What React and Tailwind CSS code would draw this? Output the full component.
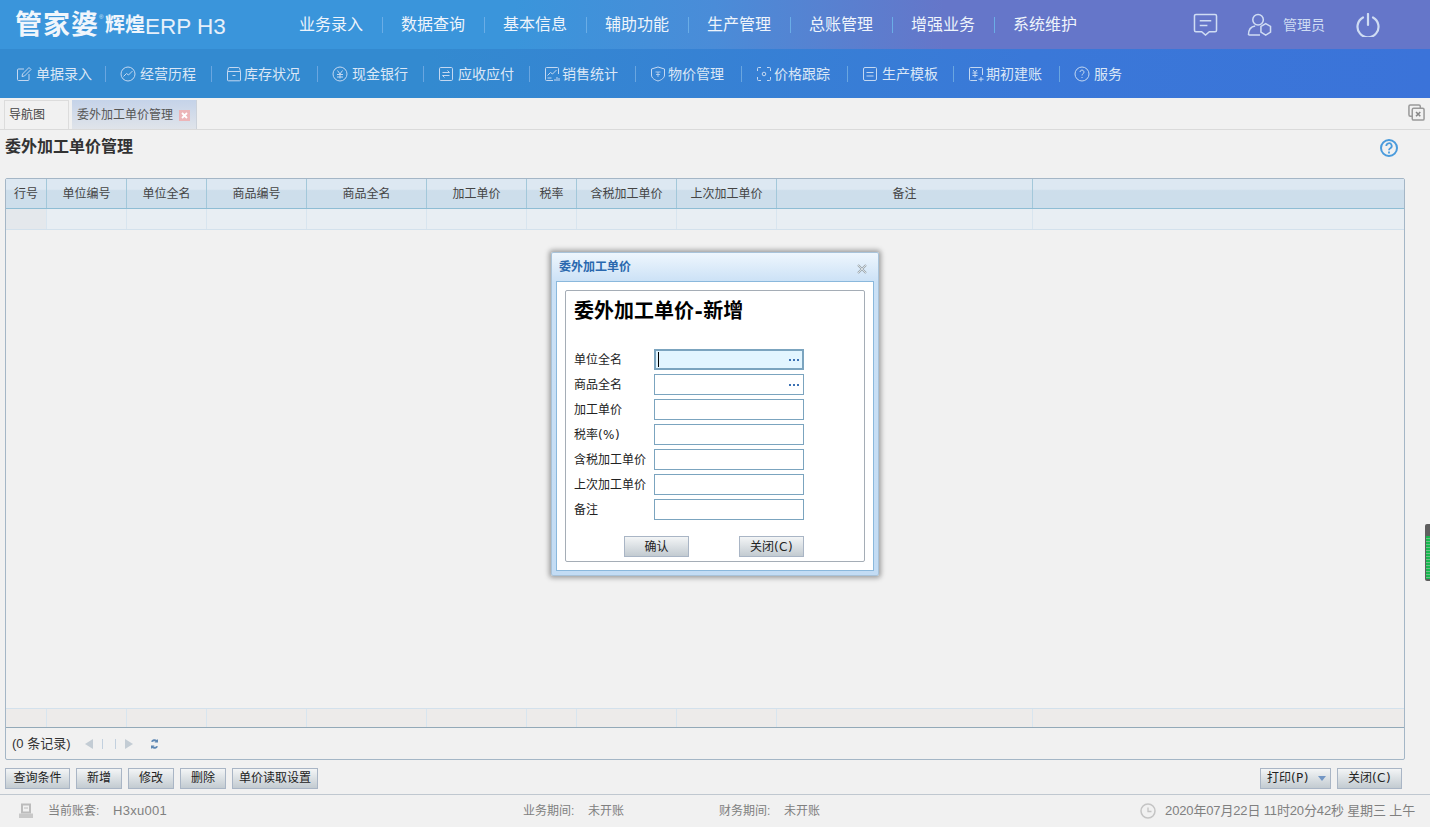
import React from 'react';

const cjk = "font-['Liberation_Sans','Noto_Sans_CJK_SC',sans-serif]";
const wide = "font-['DejaVu_Sans',sans-serif] tracking-[0.400px]";

const topMenus = ['业务录入', '数据查询', '基本信息', '辅助功能', '生产管理', '总账管理', '增强业务', '系统维护'];

const Stroke = ({ children, className = 'w-4 h-4' }) => (
  <svg viewBox="0 0 16 16" fill="none" stroke="currentColor" strokeWidth="1" className={className}>
    {children}
  </svg>
);

const subMenus = [
  {
    label: '单据录入',
    lead: 'w-[36px] pl-[16px]',
    icon: <><path d="M13 8v5.500a1 1 0 0 1-1 1H2.500a1 1 0 0 1-1-1V4a1 1 0 0 1 1-1H8" /><path d="M6 10.500l.5-2.500L13 1.500l2 2L8.500 10z" /></>,
  },
  {
    label: '经营历程',
    lead: 'w-[34px] pl-[14px]',
    icon: <><circle cx="8" cy="8" r="7" /><path d="M3.500 10.500l3-3 2 1.500 4-4" /></>,
  },
  {
    label: '库存状况',
    lead: 'w-[32px] pl-[14px]',
    icon: <><path d="M1.500 5.500V14a.8.8 0 0 0 .8.8h11.400a.8.8 0 0 0 .8-.8V5.500" /><path d="M1.500 5.500l1-3.500a.8.8 0 0 1 .8-.5h9.400a.8.8 0 0 1 .8.5l1 3.500z" /><path d="M6.500 9.500h3" /></>,
  },
  {
    label: '现金银行',
    lead: 'w-[34px] pl-[14px]',
    icon: <><circle cx="8" cy="8" r="7" /><path d="M5.500 4.500L8 8l2.500-3.500M5 8.500h6M5 11h6M8 8v4.500" /></>,
  },
  {
    label: '应收应付',
    lead: 'w-[34px] pl-[14px]',
    icon: <><rect x="1.500" y="1.500" width="13" height="13" rx="1.200" /><path d="M4.500 6.500h7l-2-2M11.500 9.500h-7l2 2" /></>,
  },
  {
    label: '销售统计',
    lead: 'w-[32px] pl-[14px]',
    icon: <><path d="M9 14.500H2.500a1 1 0 0 1-1-1v-11a1 1 0 0 1 1-1h11a1 1 0 0 1 1 1V8" /><path d="M3.500 9.500l3-3 2 1.500 4-4M3.500 12h4M11 15v-2M13 15v-4M15 15v-3" /></>,
  },
  {
    label: '物价管理',
    lead: 'w-[32px] pl-[14px]',
    icon: <><path d="M8 1l6.500 2v6c0 3-3 5-6.500 6C4.500 14 1.500 12 1.500 9V3z" /><path d="M5.500 6h5M6 8.500h4M8 6v5" strokeWidth="0.8" /></>,
  },
  {
    label: '价格跟踪',
    lead: 'w-[32px] pl-[14px]',
    icon: <><path d="M1.500 5V2.500a1 1 0 0 1 1-1H5M11 1.500h2.500a1 1 0 0 1 1 1V5M14.500 11v2.500a1 1 0 0 1-1 1H11M5 14.500H2.500a1 1 0 0 1-1-1V11" /><circle cx="8" cy="8" r="1.800" /></>,
  },
  {
    label: '生产模板',
    lead: 'w-[34px] pl-[14px]',
    icon: <><path d="M3 1.500h10.500a1 1 0 0 1 1 1V13a1.500 1.500 0 0 1-1.500 1.500H3A1.500 1.500 0 0 1 1.500 13V3A1.500 1.500 0 0 1 3 1.500z" /><path d="M4.500 6.500h7M4.500 10h7" /></>,
  },
  {
    label: '期初建账',
    lead: 'w-[32px] pl-[14px]',
    icon: <><path d="M9 14.500H2.500a1 1 0 0 1-1-1v-11a1 1 0 0 1 1-1h11a1 1 0 0 1 1 1V9" /><path d="M5 4l2 2.500L9 4M4.500 7h5M4.500 9.500h5M7 6.500v5M13 11v4.500M10.500 13.200h5" /></>,
  },
  {
    label: '服务',
    lead: 'w-[34px] pl-[14px]',
    icon: <><circle cx="8" cy="8" r="7" /><path d="M6 6a2 2 0 1 1 3 1.800c-.7.4-1 .8-1 1.700" /><path d="M8 11v1" /></>,
  },
];

const columns = [
  { label: '行号', w: 'w-[41px]' },
  { label: '单位编号', w: 'w-[80px]' },
  { label: '单位全名', w: 'w-[80px]' },
  { label: '商品编号', w: 'w-[100px]' },
  { label: '商品全名', w: 'w-[120px]' },
  { label: '加工单价', w: 'w-[100px]' },
  { label: '税率', w: 'w-[50px]' },
  { label: '含税加工单价', w: 'w-[100px]' },
  { label: '上次加工单价', w: 'w-[100px]' },
  { label: '备注', w: 'w-[256px]' },
];

const fields = [
  { label: '单位全名', focus: true, dots: true },
  { label: '商品全名', dots: true },
  { label: '加工单价' },
  { label: <>税率<span className={wide}>(%)</span></>, key: 'tax' },
  { label: '含税加工单价' },
  { label: '上次加工单价' },
  { label: '备注' },
];

const Btn = ({ children, className = '' }) => (
  <button className={`h-[21px] border border-[#a9b5c5] bg-gradient-to-b from-[#f3f5f6] to-[#c3cbd1] text-[12px] leading-[19px] text-[#222] ${className}`}>
    {children}
  </button>
);

const App = () => {
  return (
    <div className={`${cjk} relative h-[827px] w-[1430px] overflow-hidden bg-[#f1f1f1] flex flex-col`}>
      {/* top bar */}
      <div className="h-[49px] shrink-0 flex items-center bg-[linear-gradient(90deg,#3a95db_0%,#3a95db_36%,#4a8cd8_50%,#6576c9_66%,#6576c9_100%)] text-white">
        <div className="w-[299px] shrink-0 pl-[15px] flex items-end">
          <span className="text-[27px] leading-[30px] font-bold tracking-[1px] text-[#f0f6fc]">管家婆</span>
          <span className="w-[6px] text-[6px] leading-[14px] self-start text-[#dbe9f6]">®</span>
          <span className="text-[20px] leading-[29px] font-bold text-[#f0f6fc]">辉煌</span>
          <span className="text-[22.500px] leading-[27px] font-normal text-[#e6f0fa] whitespace-nowrap">ERP H3</span>
        </div>
        <div className="flex items-center">
          {topMenus.map((m, i) => (
            <div key={m} className="flex items-center">
              <span className="text-[16px] leading-[20px] text-[#eef4fb] w-[64px] whitespace-nowrap">{m}</span>
              {i < topMenus.length - 1 && <span className="w-px h-[16px] bg-[#6aade6] mx-[18.500px]" />}
            </div>
          ))}
        </div>
        <div className="ml-auto flex items-center text-[#cfdcf3]">
          <svg viewBox="0 0 26 24" fill="none" stroke="currentColor" strokeWidth="1.600" className="w-[25px] h-[23px] mr-[29px]">
            <path d="M3 1.500h20a1.500 1.500 0 0 1 1.500 1.500v15a1.500 1.500 0 0 1-1.500 1.500h-6L13 23l-4-3.500H3A1.500 1.500 0 0 1 1.500 18V3A1.500 1.500 0 0 1 3 1.500z" />
            <path d="M7 8h12M7 13h8" />
          </svg>
          <svg viewBox="0 0 26 24" fill="none" stroke="currentColor" strokeWidth="1.600" className="w-[25px] h-[23px] mr-[11px]">
            <circle cx="11.500" cy="7" r="5.500" />
            <path d="M1.500 23c0-5 2-9 7-9.500M1.500 23h12" />
            <path d="M19.500 11l5 3v6l-5 3-5-3v-6z" />
          </svg>
          <span className="text-[14px] leading-[18px] w-[42px] mr-[31px] whitespace-nowrap">管理员</span>
          <svg viewBox="0 0 24 24" fill="none" stroke="currentColor" strokeWidth="2.200" strokeLinecap="round" className="w-[24px] h-[24px] mr-[50px]">
            <path d="M7 4.500a10.500 10.500 0 1 0 10 0" />
            <path d="M12 1v11" />
          </svg>
        </div>
      </div>

      {/* second bar */}
      <div className="h-[49px] shrink-0 flex items-center bg-[linear-gradient(90deg,#338ad0_0%,#338ad0_30%,#3a78d8_72%,#3b73d9_100%)] text-[#dbe7f6]">
        {subMenus.map((m, i) => (
          <div key={m.label} className={`w-[106px] shrink-0 h-[16px] flex items-center ${i < subMenus.length - 1 ? 'border-r border-[#6aa6e0]' : ''}`}>
            <div className={`${m.lead} shrink-0 flex text-[#c4d8f1]`}>
              <Stroke>{m.icon}</Stroke>
            </div>
            <span className="text-[14px] leading-[16px] whitespace-nowrap">{m.label}</span>
          </div>
        ))}
      </div>

      {/* tabs */}
      <div className="h-[32px] shrink-0 flex items-end pl-[4px] border-b border-[#dadada] relative">
        <div className="w-[65px] h-[29px] border border-b-0 border-[#dcdcdc] pl-[4px] text-[12px] leading-[28px] text-[#444]">导航图</div>
        <div className="ml-[3px] w-[125px] h-[29px] flex items-center pl-[5px] border-r border-[#ccd2da] bg-gradient-to-b from-[#c5d3e9] to-[#e0e4ea] text-[12px] text-[#555]">
          <span className="whitespace-nowrap">委外加工单价管理</span>
          <svg viewBox="0 0 11 11" className="ml-[6px] mt-[2px] w-[11px] h-[11px]">
            <rect width="11" height="11" fill="#ecb5b8" />
            <path d="M3 3l5 5M8 3L3 8" stroke="#fff" strokeWidth="1.800" />
          </svg>
        </div>
        <svg viewBox="0 0 18 18" fill="none" className="absolute right-[5px] top-[6px] w-[17px] h-[17px]">
          <rect x="1" y="1" width="12" height="12" rx="1.500" stroke="#999" strokeWidth="1.600" />
          <rect x="4.500" y="4.500" width="12.500" height="12.500" rx="1.500" fill="#f1f1f1" stroke="#999" strokeWidth="1.600" />
          <path d="M8.500 8.500l4.500 4.500M13 8.500l-4.500 4.500" stroke="#888" strokeWidth="1.700" />
        </svg>
      </div>

      {/* page title */}
      <div className="h-[48px] shrink-0 flex items-start justify-between pl-[5px] pr-[32px] pt-[6px]">
        <span className="text-[16px] leading-[21px] font-bold text-[#333]">委外加工单价管理</span>
        <svg viewBox="0 0 18 18" fill="none" className="w-[18px] h-[18px] mt-[3px]">
          <circle cx="9" cy="9" r="8" stroke="#4a9bdc" strokeWidth="2" />
          <path d="M6.300 7a2.700 2.700 0 1 1 4 2.300c-.9.500-1.300 1-1.300 2" stroke="#4a9bdc" strokeWidth="1.800" />
          <path d="M9 12.600v1.800" stroke="#4a9bdc" strokeWidth="1.800" />
        </svg>
      </div>

      {/* grid */}
      <div className="ml-[5px] w-[1400px] h-[582px] shrink-0 border border-[#a4b6c6] rounded-[2px] flex flex-col">
        <div className="h-[30px] shrink-0 flex border-b border-[#8fbdd4] bg-[linear-gradient(180deg,#dde8f2_0%,#dde8f2_35%,#cddeeb_40%,#cddeeb_100%)]">
          {columns.map((c) => (
            <div key={c.label} className={`${c.w} shrink-0 border-r border-[#a3c8da] text-center text-[12px] leading-[30px] text-[#444]`}>{c.label}</div>
          ))}
        </div>
        <div className="h-[21px] shrink-0 flex border-b border-[#d3e1ec] bg-[#e8eef3]">
          {columns.map((c, i) => (
            <div key={c.label} className={`${c.w} shrink-0 border-r border-[#d8e5ef] ${i === 0 ? 'bg-[#e4e8ec]' : ''}`} />
          ))}
        </div>
        <div className="flex-1" />
        <div className="h-[20px] shrink-0 flex border-t border-[#d3e1ec] border-b border-b-[#93a9b8] bg-[#edebea]">
          {columns.map((c) => (
            <div key={c.label} className={`${c.w} shrink-0 border-r border-[#d8e5ef]`} />
          ))}
        </div>
        <div className="h-[31px] shrink-0 flex items-center pl-[6px] text-[#333]">
          <span className="text-[13px] leading-[16px] w-[73px] whitespace-nowrap">(0 条记录)</span>
          <svg viewBox="0 0 80 12" className="w-[80px] h-[12px]">
            <path d="M0 6l8-5v10z" fill="#c3ccd4" />
            <path d="M17.500 1v10M30.500 1v10" stroke="#c2d0de" />
            <path d="M40 1l8 5-8 5z" fill="#c3ccd4" />
            <path d="M66 3.500a4 4 0 0 1 6-1.500l1-1v3.500h-3.500l1-1a2.500 2.500 0 0 0-3 .500zM73 8.500a4 4 0 0 1-6 1.500l-1 1V7.500h3.500l-1 1a2.500 2.500 0 0 0 3-.500z" fill="#5f88b4" />
          </svg>
        </div>
      </div>

      {/* buttons */}
      <div className="mt-[8px] h-[21px] shrink-0 flex px-[5px]">
        <Btn className="w-[65px]">查询条件</Btn>
        <Btn className="w-[46px] ml-[6px]">新增</Btn>
        <Btn className="w-[46px] ml-[6px]">修改</Btn>
        <Btn className="w-[46px] ml-[6px]">删除</Btn>
        <Btn className="w-[86px] ml-[6px]">单价读取设置</Btn>
        <Btn className="w-[71px] ml-auto flex items-center pl-[6px]">
          <span className="whitespace-nowrap">打印<span className={wide}>(P)</span></span>
          <svg viewBox="0 0 8 5" className="w-[8px] h-[5px] ml-[9px]"><path d="M0 0h8L4 5z" fill="#7296c4" /></svg>
        </Btn>
        <Btn className="w-[65px] ml-[6px] mr-[23px]">关闭<span className={wide}>(C)</span></Btn>
      </div>

      {/* status bar */}
      <div className="mt-[5px] flex-1 border-t border-[#c0c8d0] flex items-center text-[12px] text-[#808080]">
        <svg viewBox="0 0 16 16" className="ml-[18px] w-[16px] h-[16px]" fill="none">
          <path d="M4 1.500h8v8H4z" stroke="#bcbcbc" strokeWidth="2" />
          <path d="M1 10.500h14v4.500H1z" fill="#c8c8c8" />
          <path d="M6 5h4" stroke="#bcbcbc" />
        </svg>
        <span className="ml-[14px] whitespace-nowrap w-[65px]">当前账套:</span>
        <span className="whitespace-nowrap text-[13px] tracking-[0.300px] w-[410px]">H3xu001</span>
        <span className="whitespace-nowrap w-[65px]">业务期间:</span>
        <span className="whitespace-nowrap w-[131px]">未开账</span>
        <span className="whitespace-nowrap w-[65px]">财务期间:</span>
        <span className="whitespace-nowrap">未开账</span>
        <svg viewBox="0 0 16 16" fill="none" className="ml-auto w-[16px] h-[16px]">
          <circle cx="8" cy="8" r="7" stroke="#c4c4c4" strokeWidth="1.500" />
          <path d="M8 4.500V8.500h3.500" stroke="#c4c4c4" strokeWidth="1.300" />
        </svg>
        <span className="ml-[9px] mr-[15px] whitespace-nowrap text-[13px] tracking-[-0.150px]">2020年07月22日 11时20分42秒 星期三 上午</span>
      </div>

      {/* side widget */}
      <div className="absolute left-[1425px] top-[524px] w-[5px] h-[57px] rounded-l-[2px] bg-[#5f5f5f] pt-[12px] pb-[2px] pl-[1px]">
        <div className="h-full bg-[repeating-linear-gradient(180deg,#18b950_0px,#18b950_2px,#6fbf88_2px,#6fbf88_3px)]" />
      </div>

      {/* dialog */}
      <div className="absolute left-[551px] top-[252px] w-[328px] h-[324px] border border-[#a8c3da] bg-[linear-gradient(180deg,#eef6fd_0%,#cbe1f6_9%,#c3dcf4_100%)] shadow-[0_0_5px_2px_rgba(0,0,0,0.35)] rounded-[2px] flex flex-col">
        <div className="h-[28px] shrink-0 flex items-center justify-between pl-[7px] pr-[11px]">
          <span className="text-[12px] font-bold text-[#2a68ae]">委外加工单价</span>
          <svg viewBox="0 0 10 10" fill="none" className="w-[10px] h-[10px] mt-[3px]">
            <path d="M1 1l8 8M9 1L1 9" stroke="#9aa5ad" strokeWidth="2" />
            <path d="M1 1l8 8M9 1L1 9" stroke="#f4f6f8" strokeWidth="0.700" />
          </svg>
        </div>
        <div className="mx-[4px] h-[290px] shrink-0 bg-white border border-[#8ab8dc] pt-[8px] px-[8px]">
          <div className="h-[272px] border border-[#a5adb6] rounded-[2px] pl-[8px] pt-[6px] flex flex-col">
            <div className="h-[28px] text-[20px] leading-[28px] font-bold text-black">委外加工单价<span className="font-['DejaVu_Sans',sans-serif] mx-[0.500px]">-</span>新增</div>
            <div className="mt-[24px] flex flex-col gap-[4px]">
              {fields.map((f) => (
                <div key={f.key || f.label} className="h-[21px] flex items-center">
                  <span className="w-[80px] shrink-0 text-[12px] text-[#222] whitespace-nowrap">{f.label}</span>
                  <div className={`w-[150px] h-[21px] border border-[#7ba4bf] flex items-center justify-between pr-[4px] ${f.focus ? 'bg-[#e2f5ff] shadow-[inset_0_0_0_1px_#7ba4bf]' : 'bg-white'}`}>
                    {f.focus ? <span className="ml-[3px] w-px h-[15px] bg-black" /> : <span />}
                    {f.dots && <span className="flex gap-[2px]"><i className="w-[2px] h-[2px] bg-[#3d72b4]" /><i className="w-[2px] h-[2px] bg-[#3d72b4]" /><i className="w-[2px] h-[2px] bg-[#3d72b4]" /></span>}
                  </div>
                </div>
              ))}
            </div>
            <div className="mt-[16px] flex pl-[50px]">
              <Btn className="w-[65px] pt-[1px]">确认</Btn>
              <Btn className="w-[65px] ml-[50px] pt-[1px]">关闭<span className={wide}>(C)</span></Btn>
            </div>
          </div>
        </div>
      </div>
    </div>
  );
};

export default App;
